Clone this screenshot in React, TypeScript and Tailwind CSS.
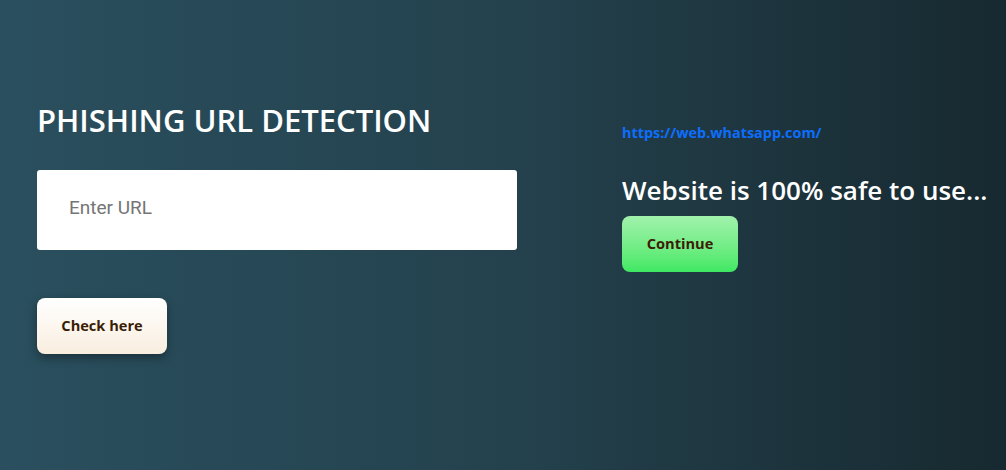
import React, { useState } from "react";

const font = { fontFamily: '"Open Sans", "Noto Sans", sans-serif' };

export default function App() {
  const [url, setUrl] = useState("");

  return (
    <div
      className="w-full h-[470px] bg-gradient-to-r from-[#2a4f5e] via-[#24424e] to-[#172930] flex"
      style={font}
    >
      {/* Left: form */}
      <div className="w-[585px] pl-[37px] pt-[100px]">
        <h1 className="text-white text-[31px] font-semibold leading-[40px]">
          PHISHING URL DETECTION
        </h1>
        <input
          value={url}
          onChange={(e) => setUrl(e.target.value)}
          placeholder="Enter URL"
          className="mt-[30px] w-[480px] h-[80px] bg-white rounded-[3px] px-[32px] pb-[6px] text-[19px] text-gray-800 placeholder:text-[#757575] outline-none"
          style={{ fontFamily: 'Roboto, "Open Sans", sans-serif' }}
        />
        <div className="mt-[48px]">
          <button className="w-[130px] h-[56px] rounded-[8px] bg-gradient-to-b from-white to-[#f9eedf] shadow-[0_4px_10px_rgba(0,0,0,0.35)] text-[#3a1d05] text-[14.6px] font-bold">
            Check here
          </button>
        </div>
      </div>

      {/* Right: result */}
      <div className="pl-[37px] pt-[122px]">
        <a
          href="#"
          className="block text-[#0d6efd] text-[14.4px] font-bold leading-[22px]"
        >
          https://web.whatsapp.com/
        </a>
        <h2 className="mt-[29px] text-white text-[26px] font-semibold leading-[34px]">
          Website is 100% safe to use...
        </h2>
        <button className="mt-[9px] w-[116px] h-[56px] rounded-[8px] bg-gradient-to-b from-[#a0f2ac] to-[#3de862] text-[#3a1d05] text-[14.6px] font-bold">
          Continue
        </button>
      </div>
    </div>
  );
}
